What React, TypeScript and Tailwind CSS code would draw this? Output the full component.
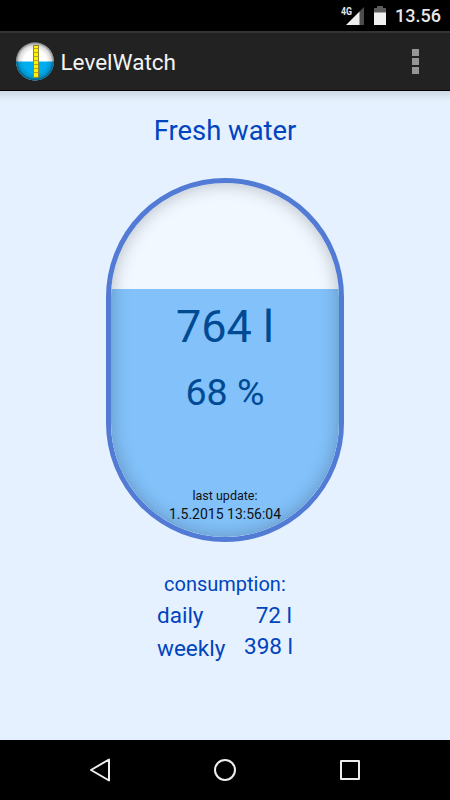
const usage = [
  { label: "daily", value: "72 l", valueClass: "pr-[4px]" },
  { label: "weekly", value: "398 l", valueClass: "pr-[3px] -mt-[2px]" },
];

function StatusBar() {
  return (
    <div className="flex h-[31px] items-center justify-end bg-black pr-[9px] text-[#e8e8e8]">
      <svg width="50" height="31" viewBox="0 0 50 31">
        <text x="0" y="15" fontSize="10.5" fontWeight="700" textLength="11" lengthAdjust="spacingAndGlyphs" fill="#e8e8e8">
          4G
        </text>
        <path d="M23 7V25H18V12Z" fill="#4c4c4c" />
        <path d="M18.5 11.5V25H5Z" fill="#eee" />
        <path d="M36 6h6v2h3v5H33V8h3z" fill="#5c5c5c" />
        <path d="M33 12.5h12V25H33z" fill="#f0f0f0" />
      </svg>
      <span className="ml-[4px] w-[46px] text-[18px] font-medium leading-[31px] whitespace-nowrap">13.56</span>
    </div>
  );
}

function AppLogo() {
  return (
    <svg width="40" height="40" viewBox="0 0 40 40">
      <defs>
        <radialGradient id="shade">
          <stop offset="0.6" stopColor="#000" stopOpacity="0" />
          <stop offset="0.85" stopColor="#000" stopOpacity="0.14" />
          <stop offset="1" stopColor="#000" stopOpacity="0.5" />
        </radialGradient>
      </defs>
      <circle cx="20" cy="19.5" r="19" fill="#fff" />
      <path d="M1 19.5H39A19 19 0 0 1 1 19.5Z" fill="#00aeef" />
      <circle cx="20" cy="19.5" r="19" fill="url(#shade)" />
      <rect x="18.5" y="3.5" width="5" height="32" fill="#fff200" stroke="#8d8638" strokeWidth="1" />
      <path d="M19 6.5h4M19 10.5h4M19 14.5h4M19 18.5h4M19 22.5h4M19 26.5h4M19 30.5h4" stroke="#b3a71c" strokeWidth="1" />
    </svg>
  );
}

function ActionBar() {
  return (
    <header className="flex h-[60px] items-center border-t-2 border-b border-t-[#353535] border-b-black bg-[#222] pl-[15px] pr-[31px]">
      <AppLogo />
      <h1 className="ml-[5.5px] text-[22.5px] leading-[30px] text-[#f3f3f3]">LevelWatch</h1>
      <div className="ml-auto flex flex-col gap-[2px] pb-px">
        <span className="size-[7px] bg-[#969696]" />
        <span className="size-[7px] bg-[#969696]" />
        <span className="size-[7px] bg-[#969696]" />
      </div>
    </header>
  );
}

function Tank() {
  return (
    <div className="relative mt-[32px] flex h-[364px] w-[238px] flex-col overflow-hidden rounded-full border-[5px] border-[#517bd5] bg-[#f1f8ff]">
      <div className="h-[106px]" />
      <div className="flex flex-1 flex-col items-center bg-[#82c1fa] text-[#004a94]">
        <p className="mt-[10px] text-[45px] leading-[56px]">764 l</p>
        <p className="mt-[14px] text-[37.5px] leading-[46px]">68 %</p>
        <p className="mt-[72px] text-[12.5px] leading-[18px] text-[#111]">last update:</p>
        <p className="text-[14px] leading-[18px] text-[#111]">1.5.2015 13:56:04</p>
      </div>
      {/* inner shade along the wall */}
      <div className="absolute inset-0 rounded-full shadow-[inset_0_0_18px_rgba(0,0,0,0.25)]" />
    </div>
  );
}

function NavBar() {
  return (
    <nav className="flex h-[60px] items-center justify-between bg-black pl-[88px] pr-[88px]">
      <svg width="24" height="26" viewBox="0 0 24 26" fill="none" stroke="#eee" strokeWidth="2" strokeLinejoin="round">
        <path d="M21 2.5V23.5L3 13Z" />
      </svg>
      <svg width="24" height="26" viewBox="0 0 24 26" fill="none" stroke="#eee" strokeWidth="2">
        <circle cx="12" cy="13" r="10" />
      </svg>
      <svg width="24" height="26" viewBox="0 0 24 26" fill="none" stroke="#eee" strokeWidth="2" strokeLinejoin="round">
        <rect x="3" y="4" width="18" height="18" />
      </svg>
    </nav>
  );
}

export default function App() {
  return (
    <div className="flex h-[800px] w-[450px] flex-col overflow-hidden bg-[#e5f1fe] font-[Roboto,sans-serif]">
      <StatusBar />
      <ActionBar />
      <main className="flex flex-1 flex-col items-center bg-[linear-gradient(#ccd9e5,#e5f1fe_10px)] text-[#0044be]">
        <h2 className="mt-[25px] text-[27.4px] leading-[30px]">Fresh water</h2>
        <Tank />
        <section className="mt-[29px] w-[142px]">
          <h3 className="pl-[10px] text-[20px] leading-[26px]">consumption:</h3>
          <div className="mt-[2px] text-[22.5px] leading-[33px]">
            {usage.map((row) => (
              <div key={row.label} className="flex justify-between pl-[3px]">
                <span>{row.label}</span>
                <span className={row.valueClass}>{row.value}</span>
              </div>
            ))}
          </div>
        </section>
      </main>
      <NavBar />
    </div>
  );
}
